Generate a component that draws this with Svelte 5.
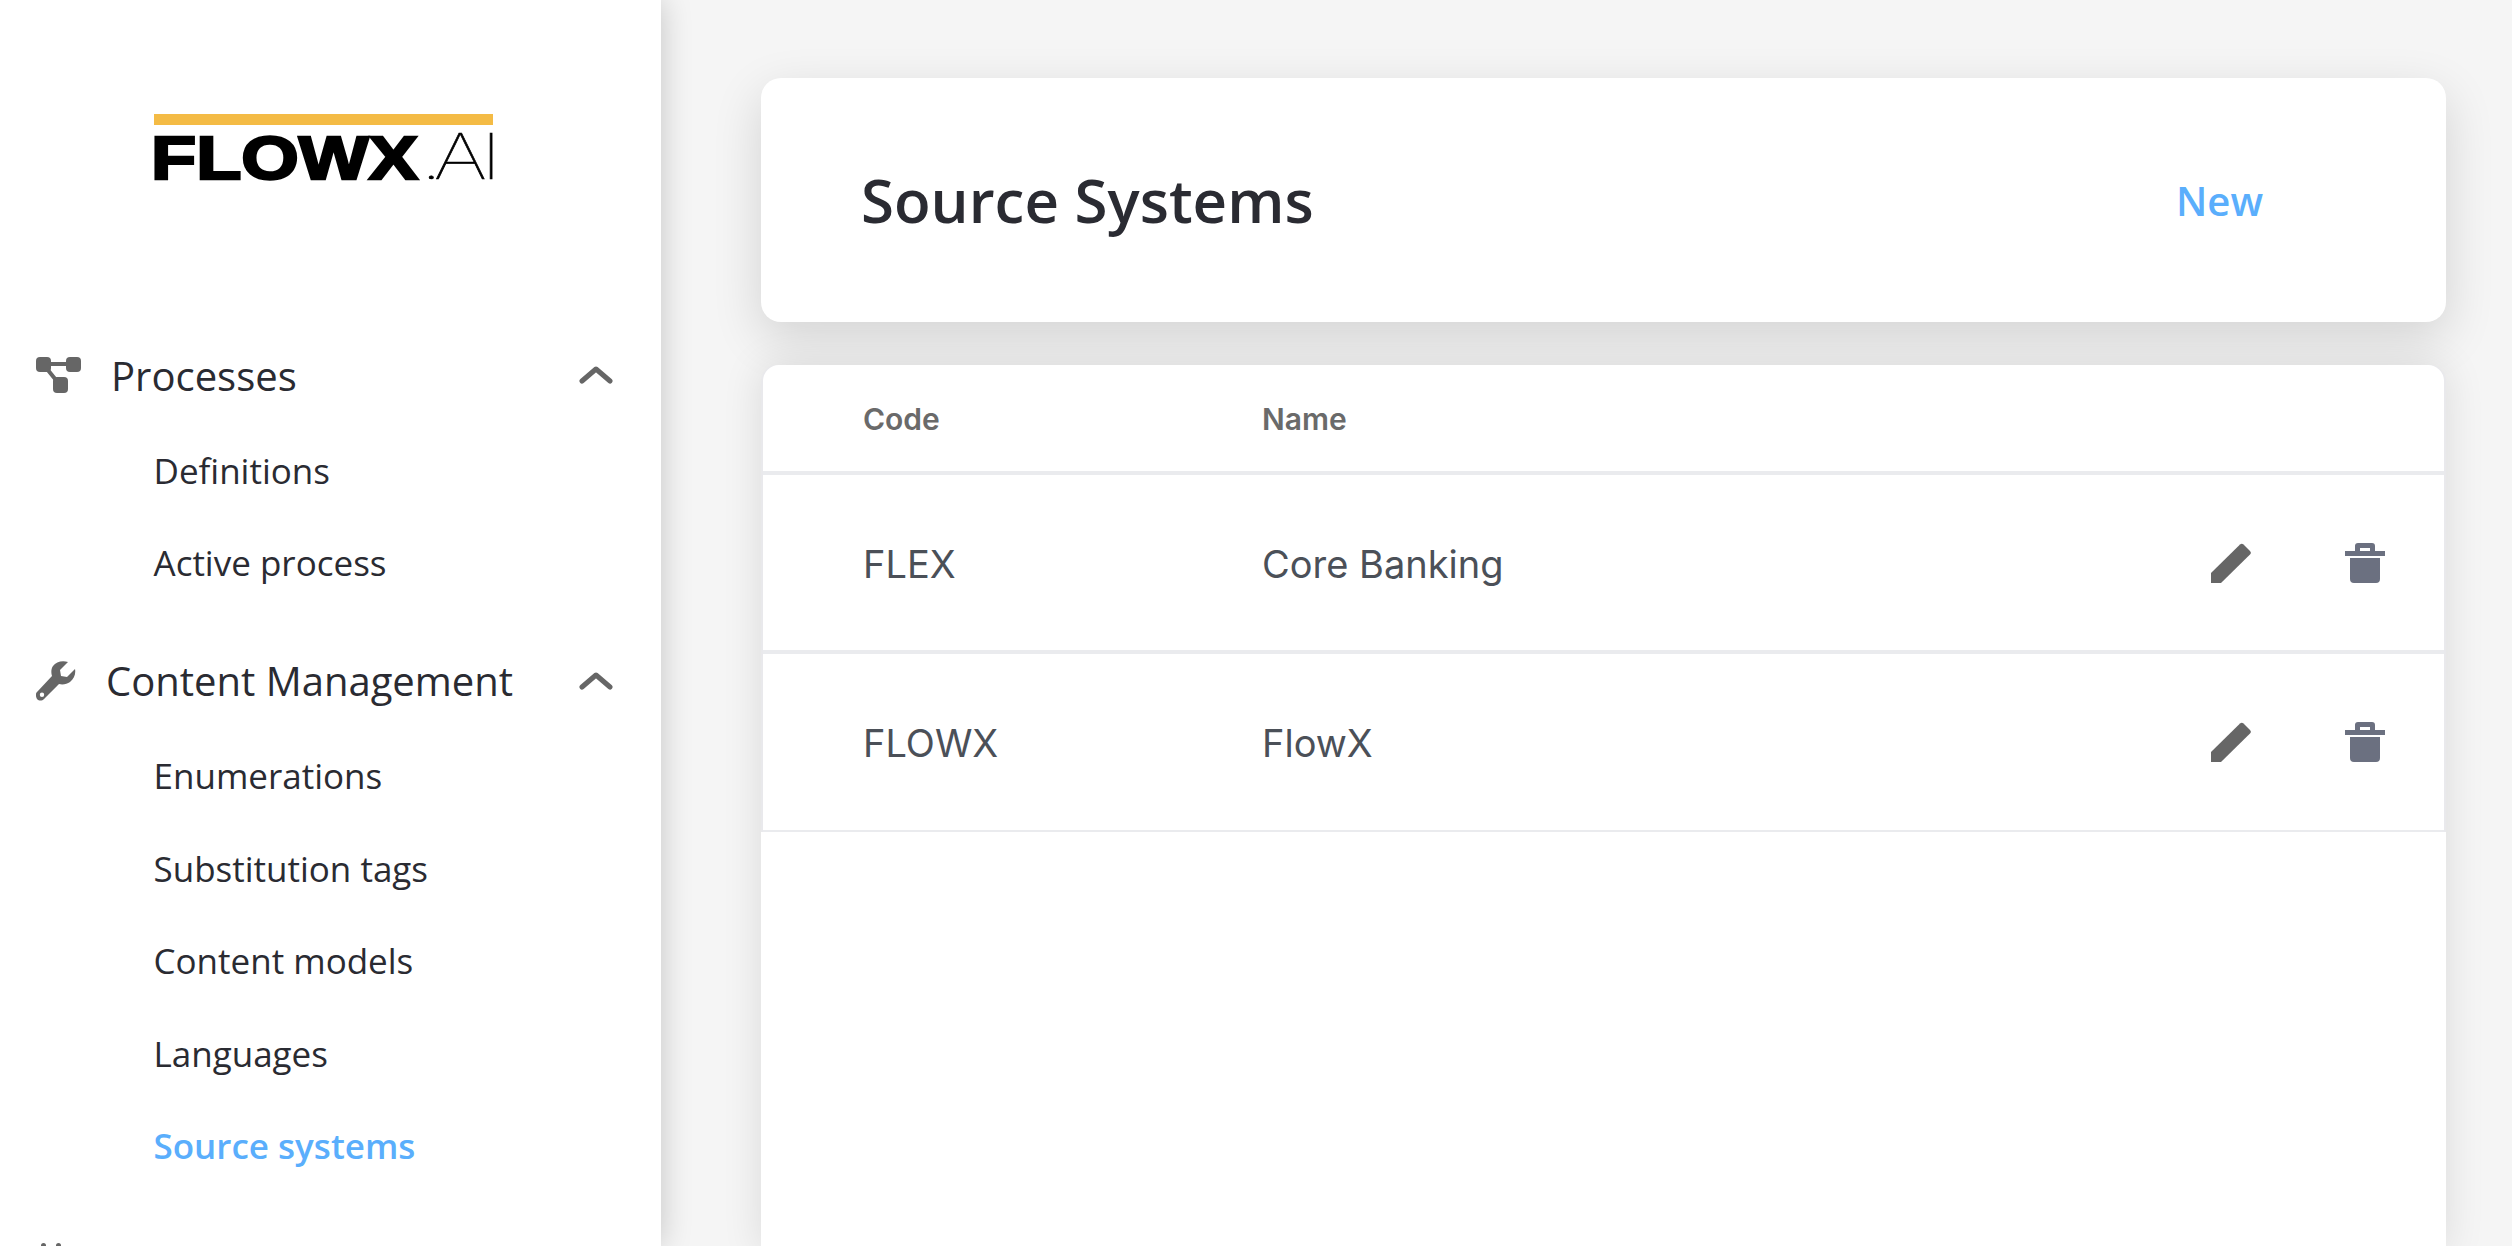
<script>
  const groups = [
    { title: "Processes", icon: "flow", items: ["Definitions", "Active process"] },
    { title: "Content Management", icon: "wrench", items: ["Enumerations", "Substitution tags", "Content models", "Languages", "Source systems"] }
  ];
  const rows = [
    { code: "FLEX", name: "Core Banking" },
    { code: "FLOWX", name: "FlowX" }
  ];
</script>

<div class="page">
  <aside class="sidebar">
    <div class="logo">
      <svg width="345" height="84" viewBox="0 0 345 84">
        <rect x="0" y="0" width="339" height="11" fill="#f4bb45" />
        <text x="-3" y="65" class="logo-bold" textLength="267" lengthAdjust="spacingAndGlyphs">FLOWX</text>
        <text transform="translate(266 65) scale(1.32 1)" x="0 10.500 46" y="0" class="logo-thin">.AI</text>
      </svg>
    </div>

    <nav>
      {#each groups as group}
        <div class="group">
          <div class="group-head">
            {#if group.icon === "flow"}
              <svg class="group-icon" width="46" height="36" viewBox="0 0 46 36">
                <path d="M7 7H38M7 7L24 28" stroke="#666" stroke-width="4" fill="none" />
                <rect x="0" y="0" width="15" height="15" rx="4" fill="#666" />
                <rect x="30" y="0" width="15" height="15" rx="4" fill="#666" />
                <rect x="17" y="20" width="15" height="16" rx="4" fill="#666" />
              </svg>
            {:else}
              <svg class="group-icon" width="41" height="41" viewBox="0 0 41 41">
                <path fill="#666" fill-rule="evenodd" d="M39 9l-8 8-6-1-1-6 8-8C26 0 20 2 17 6c-2 3-2 7-1 10L1 32c-2 2-1 5 0 7 2 2 5 2 7 0l15-15c4 1 8 0 11-2 4-3 6-8 5-13zM6 37a2.200 2.200 0 1 1 0-4.400 2.200 2.200 0 0 1 0 4.400z" />
              </svg>
            {/if}
            <span class="group-title" class:wide={group.icon === "flow"}>{group.title}</span>
            <svg class="chevron" width="34" height="18" viewBox="0 0 34 18">
              <path d="M3 15L17 3l14 12" stroke="#666" stroke-width="5" stroke-linecap="round" stroke-linejoin="round" fill="none" />
            </svg>
          </div>
          <ul>
            {#each group.items as item}
              <li class:active={item === "Source systems"}>{item}</li>
            {/each}
          </ul>
        </div>
      {/each}
      <div class="peek"><span></span><span></span></div>
    </nav>
  </aside>

  <main>
    <header class="title-card">
      <h1>Source Systems</h1>
      <button>New</button>
    </header>

    <section class="panel">
      <div class="table-card">
        <div class="row head">
          <div class="code">Code</div>
          <div class="name">Name</div>
        </div>
        {#each rows as row}
          <div class="row">
            <div class="code">{row.code}</div>
            <div class="name">{row.name}</div>
            <div class="actions">
              <svg width="40" height="40" viewBox="0 0 40 40">
                <path fill="#666" d="M0 40V30L29 1.500a2.500 2.500 0 0 1 3.500 0L39 8a2.500 2.500 0 0 1 0 3.500L10 40Z" />
              </svg>
              <svg width="40" height="40" viewBox="0 0 40 40">
                <path fill="#6b7080" fill-rule="evenodd" d="M13 0h14a3 3 0 0 1 3 3v5h10v5H0V8h10V3a3 3 0 0 1 3-3zM15 5v3h10V5zM5 15h30v21a4 4 0 0 1-4 4H9a4 4 0 0 1-4-4z" />
              </svg>
            </div>
          </div>
        {/each}
      </div>
      <div class="rest"></div>
    </section>
  </main>
</div>

<style>
  :global(body) {
    margin: 0;
    background: #f5f5f5;
  }

  .page {
    display: flex;
    height: 1246px;
    overflow: hidden;
    font-family: "Open Sans", sans-serif;
    color: #2a2b32;
  }

  .sidebar {
    width: 661px;
    flex-shrink: 0;
    background: #fff;
    box-shadow: 0 0 30px rgba(0, 0, 0, 0.2);
    z-index: 2;
    overflow: hidden;
  }

  .logo {
    padding: 114px 0 0 154px;
    height: 234px;
  }

  .logo svg {
    display: block;
  }

  .logo-bold {
    font-family: "Liberation Sans", sans-serif;
    font-weight: 700;
    font-size: 62px;
    fill: #000;
    stroke: #000;
    stroke-width: 2.500px;
  }

  .logo-thin {
    font-family: "Inter", sans-serif;
    font-weight: 100;
    font-size: 63px;
    fill: #000;
    stroke: #000;
    stroke-width: 0.600px;
  }

  .group {
    margin-bottom: 44px;
  }

  .group-head {
    display: flex;
    align-items: center;
    height: 54px;
    margin-bottom: 22.500px;
    padding-left: 36px;
    font-size: 40px;
  }

  .group-icon {
    flex-shrink: 0;
  }

  .group-title {
    margin-left: 29px;
  }

  .group-title.wide {
    margin-left: 29px;
  }

  .chevron {
    margin-left: auto;
    margin-right: 48px;
  }

  ul {
    list-style: none;
    margin: 0;
    padding: 0 0 0 153.500px;
  }

  li {
    height: 92.500px;
    line-height: 92.500px;
    font-size: 35px;
  }

  .active {
    color: #5aaefc;
    font-weight: 600;
  }

  .peek {
    display: flex;
    gap: 10px;
    padding: 6.500px 0 0 41px;
  }

  .peek span {
    width: 5px;
    height: 12px;
    border-radius: 3px 3px 0 0;
    background: #666;
  }

  main {
    flex: 1;
    padding: 78px 66px 0 100px;
    min-width: 0;
  }

  .title-card {
    display: flex;
    align-items: center;
    justify-content: space-between;
    height: 244px;
    padding: 0 183px 0 100px;
    background: #fff;
    border-radius: 20px;
    box-shadow: 0 16px 50px rgba(0, 0, 0, 0.14);
  }

  h1 {
    margin: 0;
    font-size: 60px;
    font-weight: 600;
    color: #2a2b32;
  }

  button {
    border: 0;
    padding: 0;
    background: none;
    font-family: "Open Sans", sans-serif;
    font-size: 40px;
    font-weight: 600;
    color: #5aaefc;
  }

  .panel {
    margin-top: 43px;
    background: #e9e9ec;
    border-radius: 16px 16px 0 0;
    box-shadow: 0 0 40px rgba(0, 0, 0, 0.11);
    font-family: "Inter", sans-serif;
    position: relative;
  }

  .table-card {
    margin: 0 2px;
    background: #fff;
    border-radius: 16px 16px 0 0;
  }

  .rest {
    height: 420px;
    background: #fff;
  }

  .row {
    display: flex;
    align-items: center;
    height: 175px;
    border-bottom: 4px solid #eaebee;
    padding-left: 100px;
    font-size: 38px;
    color: #4b5058;
  }

  .row:last-child {
    height: 176px;
    border-bottom-width: 2px;
  }

  .row.head {
    height: 106px;
    font-size: 30px;
    font-weight: 600;
    color: #6a6a6a;
  }

  .code {
    width: 399px;
  }

  .code,
  .name {
    padding-top: 2px;
  }

  .actions {
    margin-left: auto;
    display: flex;
    gap: 94px;
    padding-right: 59px;
  }
</style>
